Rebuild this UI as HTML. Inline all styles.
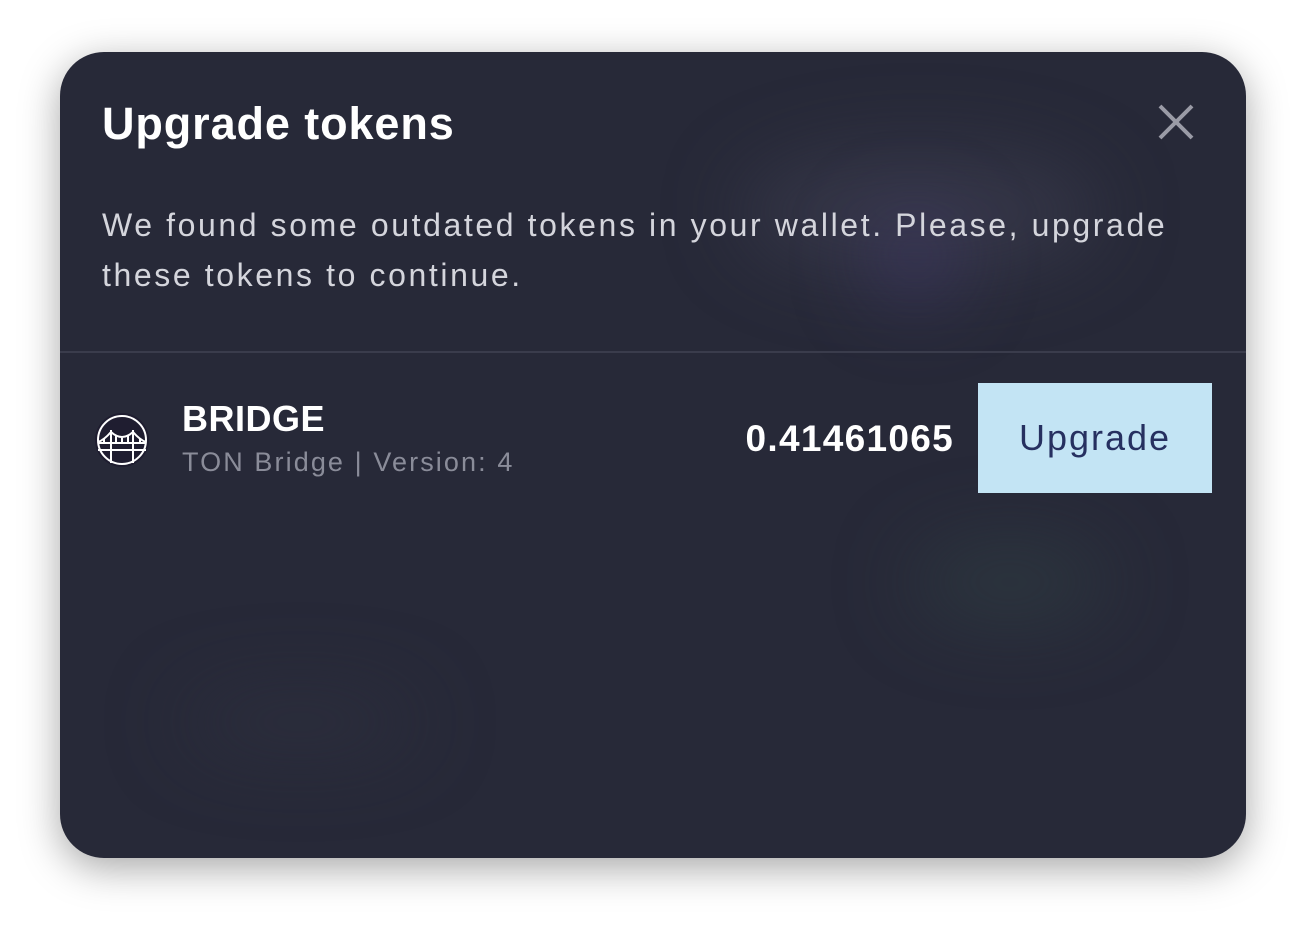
<!DOCTYPE html>
<html><head><meta charset="utf-8"><style>
html,body{margin:0;padding:0;background:#fff;width:1306px;height:926px;overflow:hidden;font-family:"Liberation Sans",sans-serif;}
.card{position:absolute;left:60px;top:52px;width:1186px;height:806px;border-radius:44px;background:#272938;box-shadow:0 10px 40px rgba(0,0,0,0.35);overflow:hidden;}
.blob{position:absolute;border-radius:50%;filter:blur(40px);}
h1{position:absolute;left:42px;top:46px;margin:0;font-size:45px;font-weight:bold;color:#fff;letter-spacing:0.9px;}
.close{position:absolute;left:1098px;top:52px;}
.desc{position:absolute;left:42px;top:148px;width:1080px;font-size:32px;line-height:50px;color:#d4d5dc;letter-spacing:2.6px;}
.line{position:absolute;left:0;top:299px;width:100%;height:2px;background:#3a3c4c;}
.icon{position:absolute;left:34px;top:360px;}
.name{position:absolute;left:122px;top:346px;font-size:36px;font-weight:bold;color:#fff;letter-spacing:0.5px;}
.sub{position:absolute;left:122px;top:395px;font-size:27px;color:#8a8c99;letter-spacing:2.1px;}
.amt{position:absolute;right:292px;top:366px;font-size:37px;font-weight:bold;color:#fff;letter-spacing:1.3px;}
.btn{position:absolute;left:918px;top:331px;width:234px;height:110px;background:#c3e4f4;color:#263060;font-size:36px;display:flex;align-items:center;justify-content:center;letter-spacing:2px;}
</style></head><body>
<div class="card">
<div class="blob" style="left:680px;top:100px;width:360px;height:120px;background:rgba(70,70,90,0.45)"></div>
<div class="blob" style="left:810px;top:160px;width:90px;height:90px;background:rgba(70,60,120,0.45)"></div>
<div class="blob" style="left:850px;top:490px;width:200px;height:80px;background:rgba(50,70,70,0.45)"></div>
<div class="blob" style="left:120px;top:640px;width:240px;height:60px;background:rgba(50,52,66,0.5)"></div>
<h1>Upgrade tokens</h1>
<svg class="close" width="36" height="36" viewBox="0 0 36 36"><path d="M2 2L34 34M34 2L2 34" stroke="#9a9ba6" stroke-width="4"/></svg>
<div class="desc">We found some outdated tokens in your wallet. Please, upgrade these tokens to continue.</div>
<div class="line"></div>
<svg class="icon" width="56" height="56" viewBox="0 0 56 56">
<circle cx="28" cy="28" r="27" fill="#1f1d30"/>
<circle cx="28" cy="28" r="24" fill="none" stroke="#fff" stroke-width="2"/>
<path d="M17 18V51M39 18V51M4 31H52M4 38H52M17 20Q28 30 39 20M17 20Q10 28 4 30M39 20Q46 28 52 30M22 24V31M28 26V31M34 24V31M10 26V31M46 26V31" stroke="#fff" stroke-width="2" fill="none"/>
</svg>
<div class="name">BRIDGE</div>
<div class="sub">TON Bridge | Version: 4</div>
<div class="amt">0.41461065</div>
<div class="btn">Upgrade</div>
</div>
</body></html>
